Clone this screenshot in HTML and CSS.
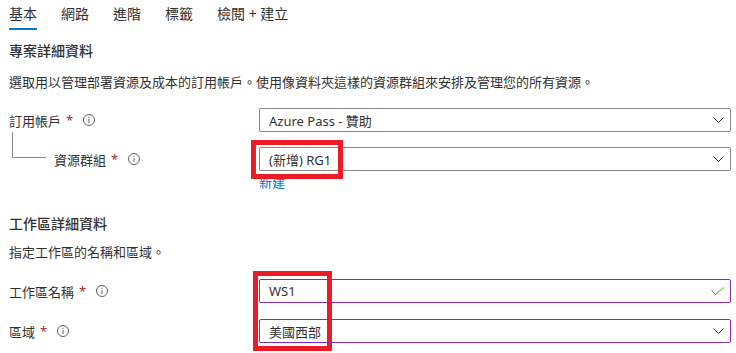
FILE: index.html
```
<!DOCTYPE html>
<html lang="zh-Hant">
<head>
<meta charset="utf-8">
<link rel="stylesheet" href="styles.css">
</head>
<body>
<div class="page">
  <nav class="tabs">
    <span class="tab active">基本</span>
    <span class="tab">網路</span>
    <span class="tab">進階</span>
    <span class="tab">標籤</span>
    <span class="tab">檢閱 + 建立</span>
  </nav>

  <h2 class="heading h1">專案詳細資料</h2>
  <p class="desc">選取用以管理部署資源及成本的訂用帳戶。使用像資料夾這樣的資源群組來安排及管理您的所有資源。</p>

  <div class="row r1">
    <div class="label"><span>訂用帳戶</span><span class="star">*</span><svg class="info" width="12" height="12" viewBox="0 0 12 12"><circle cx="6" cy="6" r="5.5" fill="none" stroke="#605e5c" stroke-width="1"/><rect x="5.5" y="5" width="1" height="4" fill="#605e5c"/><rect x="5.5" y="3" width="1" height="1" fill="#605e5c"/></svg></div>
    <div class="control select"><span class="value">Azure Pass - 贊助</span><svg class="chev" width="11" height="6" viewBox="0 0 11 6"><polyline points="0.5,0.5 5.5,5.5 10.5,0.5" fill="none" stroke="#323130" stroke-width="1"/></svg></div>
  </div>

  <div class="row r2">
    <div class="label tree"><span>資源群組</span><span class="star">*</span><svg class="info" width="12" height="12" viewBox="0 0 12 12"><circle cx="6" cy="6" r="5.5" fill="none" stroke="#605e5c" stroke-width="1"/><rect x="5.5" y="5" width="1" height="4" fill="#605e5c"/><rect x="5.5" y="3" width="1" height="1" fill="#605e5c"/></svg></div>
    <div class="stack">
      <div class="control select hl1"><span class="value">(新增) RG1</span><svg class="chev" width="11" height="6" viewBox="0 0 11 6"><polyline points="0.5,0.5 5.5,5.5 10.5,0.5" fill="none" stroke="#323130" stroke-width="1"/></svg><span class="redbox box1"></span></div>
      <a class="link">新建</a>
    </div>
  </div>

  <h2 class="heading h2">工作區詳細資料</h2>
  <p class="desc d2">指定工作區的名稱和區域。</p>

  <div class="row r3">
    <div class="label"><span>工作區名稱</span><span class="star">*</span><svg class="info" width="12" height="12" viewBox="0 0 12 12"><circle cx="6" cy="6" r="5.5" fill="none" stroke="#605e5c" stroke-width="1"/><rect x="5.5" y="5" width="1" height="4" fill="#605e5c"/><rect x="5.5" y="3" width="1" height="1" fill="#605e5c"/></svg></div>
    <div class="control purple"><span class="value">WS1</span><svg class="check" width="13" height="8" viewBox="0 0 13 8"><polyline points="0.5,3.5 4.5,7.5 12.5,0.5" fill="none" stroke="#57a300" stroke-width="1"/></svg><span class="redbox box2"></span></div>
  </div>

  <div class="row r4">
    <div class="label"><span>區域</span><span class="star">*</span><svg class="info" width="12" height="12" viewBox="0 0 12 12"><circle cx="6" cy="6" r="5.5" fill="none" stroke="#605e5c" stroke-width="1"/><rect x="5.5" y="5" width="1" height="4" fill="#605e5c"/><rect x="5.5" y="3" width="1" height="1" fill="#605e5c"/></svg></div>
    <div class="control select purple"><span class="value">美國西部</span><svg class="chev" width="11" height="6" viewBox="0 0 11 6"><polyline points="0.5,0.5 5.5,5.5 10.5,0.5" fill="none" stroke="#323130" stroke-width="1"/></svg></div>
  </div>
</div>
</body>
</html>
```
FILE: styles.css
```
html, body {
  margin: 0;
  padding: 0;
  background: #ffffff;
}
body {
  font-family: "Segoe UI", "Noto Sans", "Noto Sans CJK TC", sans-serif;
  color: #323130;
  font-size: 13px;
  overflow: hidden;
}
.page {
  width: 736px;
  height: 353px;
  padding-left: 9px;
  box-sizing: border-box;
}
.tabs {
  display: flex;
  gap: 24px;
  height: 30px;
}
.tab {
  font-size: 14px;
  line-height: 20px;
  padding: 4px 0 4px;
  border-bottom: 2px solid transparent;
  white-space: nowrap;
}
.tab.active {
  border-bottom-color: #0078d4;
}
.heading {
  font-size: 14px;
  font-weight: 500;
  line-height: 20px;
  margin: 0;
}
.h1 { margin-top: 11px; }
.h2 { margin-top: 24px; }
.desc {
  margin: 12px 0 0;
  line-height: 18px;
  white-space: nowrap;
}
.d2 { margin-top: 9px; }
.row {
  display: flex;
  align-items: flex-start;
}
.r1 { margin-top: 17px; }
.r2 { margin-top: 15px; }
.r3 { margin-top: 18px; }
.r4 { margin-top: 16px; }
.label {
  width: 250px;
  height: 24px;
  display: flex;
  align-items: center;
  flex-shrink: 0;
  position: relative;
}
.label.tree {
  padding-left: 45px;
  box-sizing: border-box;
}
.label.tree::before {
  content: "";
  position: absolute;
  left: 3px;
  top: -15px;
  width: 33px;
  height: 25px;
  border-left: 1px solid #8a8886;
  border-bottom: 1px solid #8a8886;
}
.star {
  color: #a4262c;
  margin-left: 5px;
}
.info {
  margin-left: 10px;
}
.stack {
  display: flex;
  flex-direction: column;
  width: 472px;
}
.control {
  width: 472px;
  height: 24px;
  box-sizing: border-box;
  border: 1px solid #8a8886;
  border-radius: 2px;
  display: flex;
  align-items: center;
  justify-content: space-between;
  padding: 0 6px 0 9px;
  position: relative;
}
.control.purple {
  border-color: #8c2aa8;
}
.value {
  white-space: nowrap;
}
.link {
  color: #0078d4;
  line-height: 16px;
  margin-top: 3px;
}
.redbox {
  position: absolute;
  border: 5px solid #ed1c24;
  box-sizing: border-box;
  pointer-events: none;
}
.box1 {
  left: -9px;
  top: -8px;
  width: 92px;
  height: 39px;
}
.box2 {
  left: -7px;
  top: -9px;
  width: 79px;
  height: 80px;
}
```
